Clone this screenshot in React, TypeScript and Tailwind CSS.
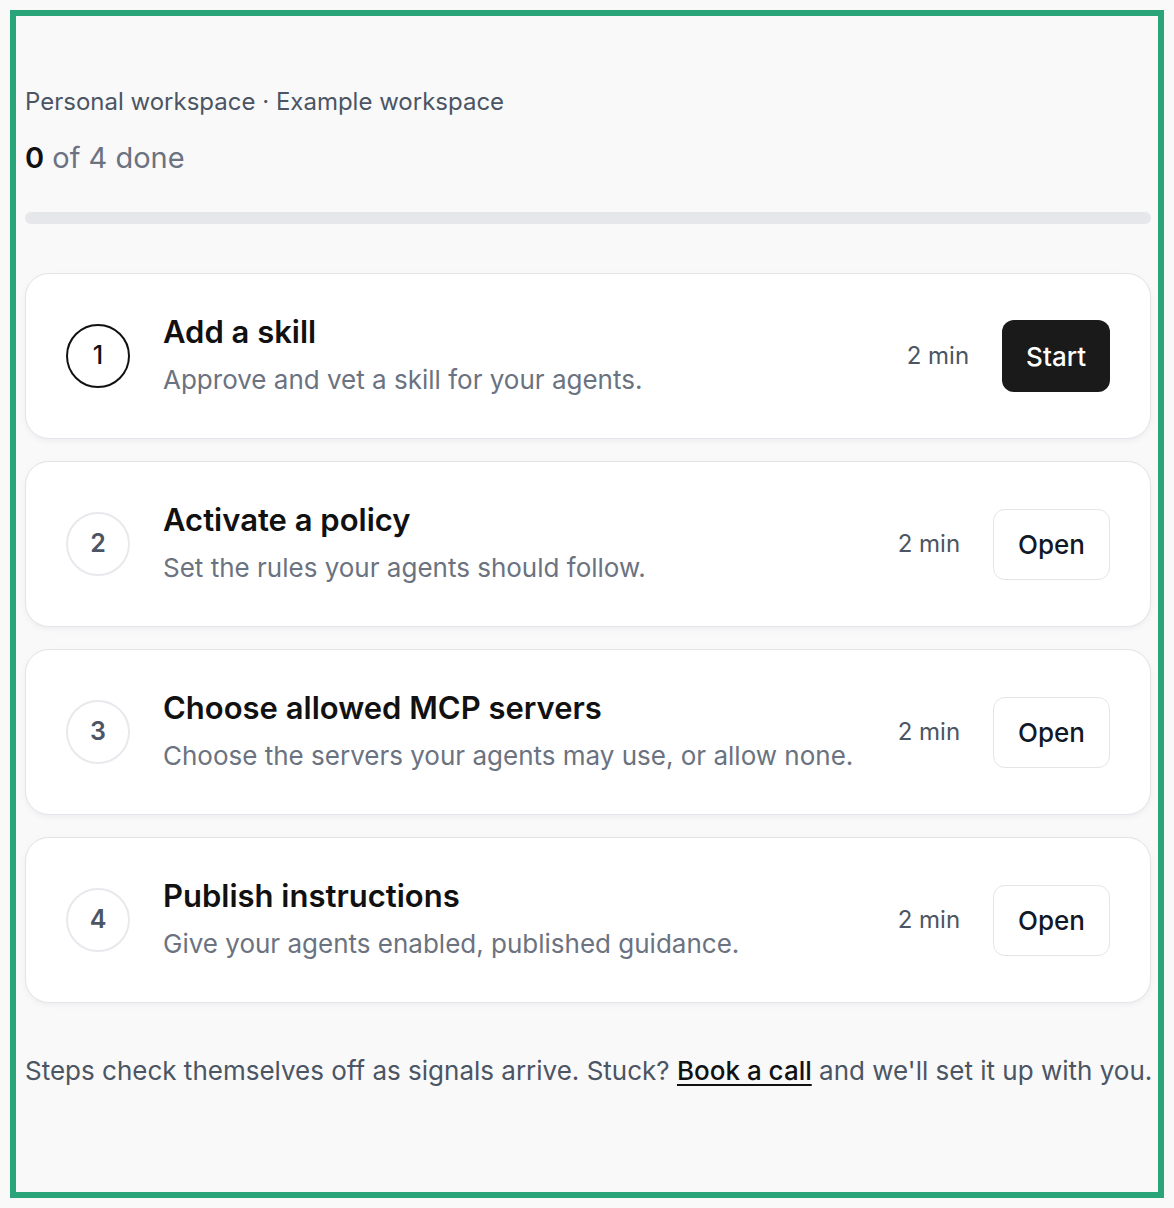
import React from 'react';

type Step = {
    n: number;
    title: string;
    body: string;
    action: 'Start' | 'Open';
};

const steps: Step[] = [
    { n: 1, title: 'Add a skill', body: 'Approve and vet a skill for your agents.', action: 'Start' },
    { n: 2, title: 'Activate a policy', body: 'Set the rules your agents should follow.', action: 'Open' },
    { n: 3, title: 'Choose allowed MCP servers', body: 'Choose the servers your agents may use, or allow none.', action: 'Open' },
    { n: 4, title: 'Publish instructions', body: 'Give your agents enabled, published guidance.', action: 'Open' },
];

const StepCard: React.FC<{ step: Step }> = ({ step }) => {
    const active = step.action === 'Start';

    return (
        <div className="flex items-center rounded-[24px] border border-[#e4e5e9] bg-white px-[40px] py-[40px] shadow-[0_2px_6px_rgba(17,24,39,0.05)]">
            <div
                className={
                    active
                        ? 'flex h-[64px] w-[64px] shrink-0 items-center justify-center rounded-full border-[2px] border-[#111111] text-[25px] font-medium text-[#111111]'
                        : 'flex h-[64px] w-[64px] shrink-0 items-center justify-center rounded-full border-[2px] border-[#e8e9ed] text-[25px] font-semibold text-[#4b5563]'
                }
            >
                {step.n}
            </div>

            <div className="ml-[33px] flex min-w-0 flex-1 flex-col gap-[12px]">
                <div className="text-[31px] font-semibold leading-[36px] text-[#111111]">{step.title}</div>
                <div className="text-[26px] leading-[36px] text-[#6b7280]">{step.body}</div>
            </div>

            <div className="flex shrink-0 items-center gap-[33px]">
                <span className="text-[24px] text-[#4b5563]">2 min</span>
                {active ? (
                    <button className="h-[72px] rounded-[12px] bg-[#1a1a1a] px-[24px] text-[26px] font-medium text-white">
                        Start
                    </button>
                ) : (
                    <button className="h-[71px] rounded-[12px] border border-[#e4e5e9] bg-white px-[24px] text-[26px] font-medium text-[#111827]">
                        Open
                    </button>
                )}
            </div>
        </div>
    );
};

export default function App() {
    return (
        <div className="min-h-[1208px] bg-[#f9f9fa] p-[10px] font-['Inter',sans-serif]">
            <div className="border-[6px] border-[#2aa57a] pl-[9px] pr-[7px] pt-[71px] pb-[103px]">
                <div className="text-[24px] leading-[30px] text-[#4b5563]">
                    Personal workspace · Example workspace
                </div>

                <div className="mt-[23px] text-[29px] leading-[36px] text-[#6b7280]">
                    <span className="font-semibold text-[#111111]">0</span> of 4 done
                </div>

                <div className="mt-[36px] h-[12px] w-full rounded-full bg-[#e5e7eb]" />

                <div className="mt-[49px] flex flex-col gap-[22px]">
                    {steps.map((s) => (
                        <StepCard key={s.n} step={s} />
                    ))}
                </div>

                <p className="mt-[50px] whitespace-nowrap text-[26px] leading-[36px] text-[#4b5563]">
                    Steps check themselves off as signals arrive. Stuck?{' '}
                    <a href="#" className="font-medium text-[#111111] underline underline-offset-[4px]">
                        Book a call
                    </a>{' '}
                    and we'll set it up with you.
                </p>
            </div>
        </div>
    );
}
